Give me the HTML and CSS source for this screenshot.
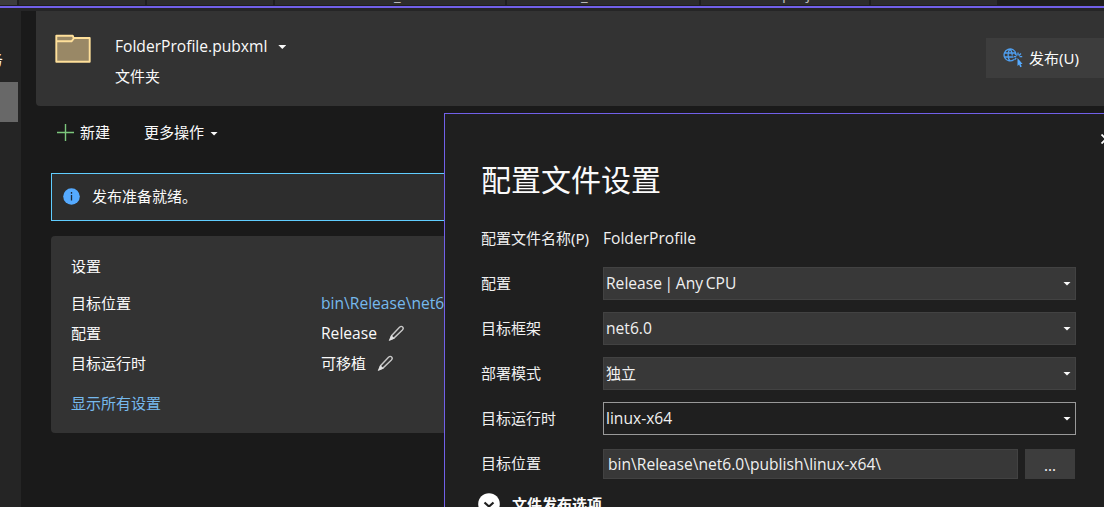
FILE: index.html
```html
<!DOCTYPE html>
<html lang="zh-CN">
<head>
<meta charset="utf-8">
<title>FolderProfile.pubxml</title>
<link rel="stylesheet" href="styles.css">
</head>
<body>
<div class="tabs">
  <div class="tab tab-active"></div>
  <div class="tab tab-b"></div>
  <div class="tab tab-c"></div>
  <div class="tab tab-d"><span>_</span></div>
  <div class="tab tab-e"><span>_</span></div>
  <div class="tab tab-f"><span>proj</span></div>
  <div class="tab tab-g"></div>
</div>
<div class="accent"></div>
<div class="body">
  <aside class="rail">
    <div class="rail-item"><span>连接的服务</span></div>
    <div class="rail-item rail-selected"></div>
  </aside>
  <main class="page">
    <header class="profile">
      <svg class="folder" width="38" height="32" viewBox="0 0 38 32">
        <path d="M2 2.500h16l2 3h16v23.500H2z" fill="#998866"/>
        <path d="M2.300 8.300h15.200l2.300-2.800-1-2.700H2.300zM2.300 8v20.700h33.400V5H19.800" fill="none" stroke="#ffe09a" stroke-width="1.900" stroke-linejoin="round"/>
      </svg>
      <div class="profile-text">
        <div class="line"><span class="latin">FolderProfile.pubxml</span><i class="caret"></i></div>
        <div class="line">文件夹</div>
      </div>
      <div class="publish">
        <svg width="20" height="20" viewBox="0 0 20 20" fill="none" stroke="#4f9ff0" stroke-width="1.300">
          <path d="M11 11.500A6 6 0 1 1 13 6M1.500 5h11M1.500 9h9M7 1C4.500 3.500 4.500 10.500 7 13M7 1c1.500 1.500 2.300 3.500 2.300 6.500"/>
          <path d="M15 4.500v3M11.800 5.500l2 2M18 5.500l-2 2M16.500 8.700h2.700M11 8.700h2.300M13.300 10l-1.800 1.800"/>
          <path d="M14.500 10v8l1.600-1.500 1.200 2.700 1.500-.7-1.200-2.500h2z" fill="#55aaff" stroke="none"/>
        </svg>
        <span>发布(U)</span>
      </div>
    </header>
    <nav class="actions">
      <svg width="17" height="17" viewBox="0 0 17 17"><path d="M8.500 0v17M0 8.500h17" stroke="#7cc67c" stroke-width="1.400"/></svg>
      <span class="new">新建</span><span>更多操作</span><i class="caret"></i>
    </nav>
    <div class="notice">
      <svg width="17" height="17" viewBox="0 0 17 17"><circle cx="8.500" cy="8.500" r="8.300" fill="#55aaff"/><path d="M8.500 7v5.500M8.500 4v1.700" stroke="#1a2a3c" stroke-width="1.300"/></svg>
      <span>发布准备就绪。</span>
    </div>
    <section class="settings">
      <div class="line heading">设置</div>
      <div class="row"><span>目标位置</span><a class="latin">bin\Release\net6.0\publish\</a></div>
      <div class="row"><span>配置</span><span class="latin">Release</span>
        <svg class="pencil" width="17" height="17" viewBox="0 0 17 17"><path d="M2 14.500l1.800-4L11.500 2.300c1.200-1.200 2.400-1 3.100-.3.800.8.900 1.900-.2 3L6.200 12.800z" fill="none" stroke="#c8c8c8" stroke-width="1.400"/><path d="M1 16l2.200-6 3.500 3.500z" fill="#e0e0e0"/></svg></div>
      <div class="row"><span>目标运行时</span><span>可移植</span>
        <svg class="pencil" width="17" height="17" viewBox="0 0 17 17"><path d="M2 14.500l1.800-4L11.500 2.300c1.200-1.200 2.400-1 3.100-.3.800.8.900 1.900-.2 3L6.200 12.800z" fill="none" stroke="#c8c8c8" stroke-width="1.400"/><path d="M1 16l2.200-6 3.500 3.500z" fill="#e0e0e0"/></svg></div>
      <a class="line show-all">显示所有设置</a>
    </section>
  </main>
</div>
<div class="dialog">
  <svg class="close" width="10" height="10" viewBox="0 0 10 10"><path d="M.5.500l9 9M9.500.500l-9 9" stroke="#fff" stroke-width="1.800"/></svg>
  <h1>配置文件设置</h1>
  <div class="form">
    <label>配置文件名称(P)</label><div class="latin">FolderProfile</div>
    <label>配置</label><div class="combo"><span class="latin tight">Release | Any CPU</span><i class="caret"></i></div>
    <label>目标框架</label><div class="combo"><span class="latin">net6.0</span><i class="caret"></i></div>
    <label>部署模式</label><div class="combo"><span>独立</span><i class="caret"></i></div>
    <label>目标运行时</label><div class="combo combo-focus"><span class="latin">linux-x64</span><i class="caret"></i></div>
    <label>目标位置</label><div class="location"><div class="input latin">bin\Release\net6.0\publish\linux-x64\</div><div class="browse">...</div></div>
  </div>
  <div class="expander">
    <svg width="22" height="22" viewBox="0 0 22 22"><circle cx="11" cy="11" r="10.800" fill="#fff"/><path d="M6.500 9.500l4.500 4 4.500-4" fill="none" stroke="#1f1f1f" stroke-width="2.200"/></svg>
    <span>文件发布选项</span>
  </div>
</div>
</body>
</html>
```
FILE: styles.css
```css
* { box-sizing: border-box; }
body {
  margin: 0;
  width: 1104px;
  height: 507px;
  overflow: hidden;
  background: #1f1f1f;
  color: #fafafa;
  font: 15px/30px "Noto Sans", "Noto Sans CJK SC", sans-serif;
  white-space: nowrap;
}
.latin { font-family: "Open Sans", "Noto Sans", sans-serif; font-size: 15.6px; }
.tight { word-spacing: -1.400px; }
.line { display: flex; align-items: center; height: 30px; }
.tabs { display: flex; gap: 2px; height: 6px; padding-bottom: 1px; }
.tab { display: flex; align-items: flex-end; overflow: hidden; background: #2d2d2d; color: #b8b8b8; line-height: 20px; }
.tab-active { width: 17px; background: #3d3d3d; }
.tab-b, .tab-c, .tab-g { width: 126px; }
.tab-d { width: 230px; padding-left: 119px; }
.tab-e { width: 192px; padding-left: 74px; }
.tab-f { width: 168px; padding-left: 81px; line-height: 23px; }
.accent { height: 5px; border-top: 2px solid #7160e8; background: #252526; }
.body { display: flex; height: 496px; }
.rail { width: 21px; padding: 31px 3px 0 0; background: #252525; }
.rail-item { display: flex; justify-content: flex-end; height: 40px; overflow: hidden; padding: 2px 15px 0 0; }
.rail-selected { background: #686868; }
.page { flex: 1; min-width: 0; padding-left: 15px; background: #1a1a1a; }
.profile { display: flex; height: 95px; padding-left: 18px; background: #333; border-radius: 0 0 0 4px; }
.folder { margin-top: 22px; }
.profile-text { margin: 20px auto 0 23px; }
.caret {
  width: 8px;
  height: 4px;
  background: #fafafa;
  clip-path: polygon(0 0, 100% 0, 50% 100%);
}
.profile-text .caret { margin: 2px 0 0 11px; }
.publish { display: flex; gap: 6px; align-items: center; width: 118px; height: 40px; margin-top: 27px; padding-left: 17px; background: #3d3d3d; }
.actions { display: flex; align-items: center; height: 52px; padding-left: 21px; }
.actions .new { margin: 0 34px 0 6px; }
.actions .caret { margin: 3px 0 0 6px; }
.notice { display: flex; align-items: center; gap: 12px; height: 48px; margin: 15px 0 0 15px; padding: 0 11px 2px; border: 1px solid #60cdff; background: #2d2d2d; }
.settings { height: 197px; margin: 15px 0 0 15px; padding: 15px 20px; background: #333; border-radius: 4px; }
.heading { margin-bottom: 7px; }
.row { display: flex; align-items: center; height: 30px; }
.row > :first-child { width: 250px; }
.pencil { margin-left: 11px; }
.settings a { color: #76b9ed; }
.show-all { margin-top: 10px; }
.dialog { position: absolute; left: 444px; top: 113px; width: 660px; height: 394px; overflow: hidden; padding: 44px 28px 0 36px; border: solid #7160e8; border-width: 1px 0 0 1px; background: #1f1f1f; }
.close { position: absolute; left: 656px; top: 20px; }
h1 { margin: 0; font-size: 30px; line-height: 44px; font-weight: 400; }
.form { display: grid; grid-template-columns: 122px 473px; grid-auto-rows: 33px; row-gap: 12px; margin-top: 20px; line-height: 33px; color: #f0f0f0; }
.combo { display: flex; align-items: center; justify-content: space-between; padding: 0 4px 0 2px; border: 1px solid #424242; background: #383838; line-height: 31px; }
.combo-focus { border-color: #999; background: #1f1f1f; }
.location { display: flex; gap: 7px; padding: 2px 1px 1px 0; }
.input { flex: 1; padding-left: 4px; border: 1px solid #424242; background: #383838; line-height: 28px; }
.browse { width: 50px; background: #3d3d3d; text-align: center; line-height: 32px; }
.expander { display: flex; align-items: center; gap: 12px; height: 30px; margin: 9px 0 0 -3px; font-weight: 700; }
```
